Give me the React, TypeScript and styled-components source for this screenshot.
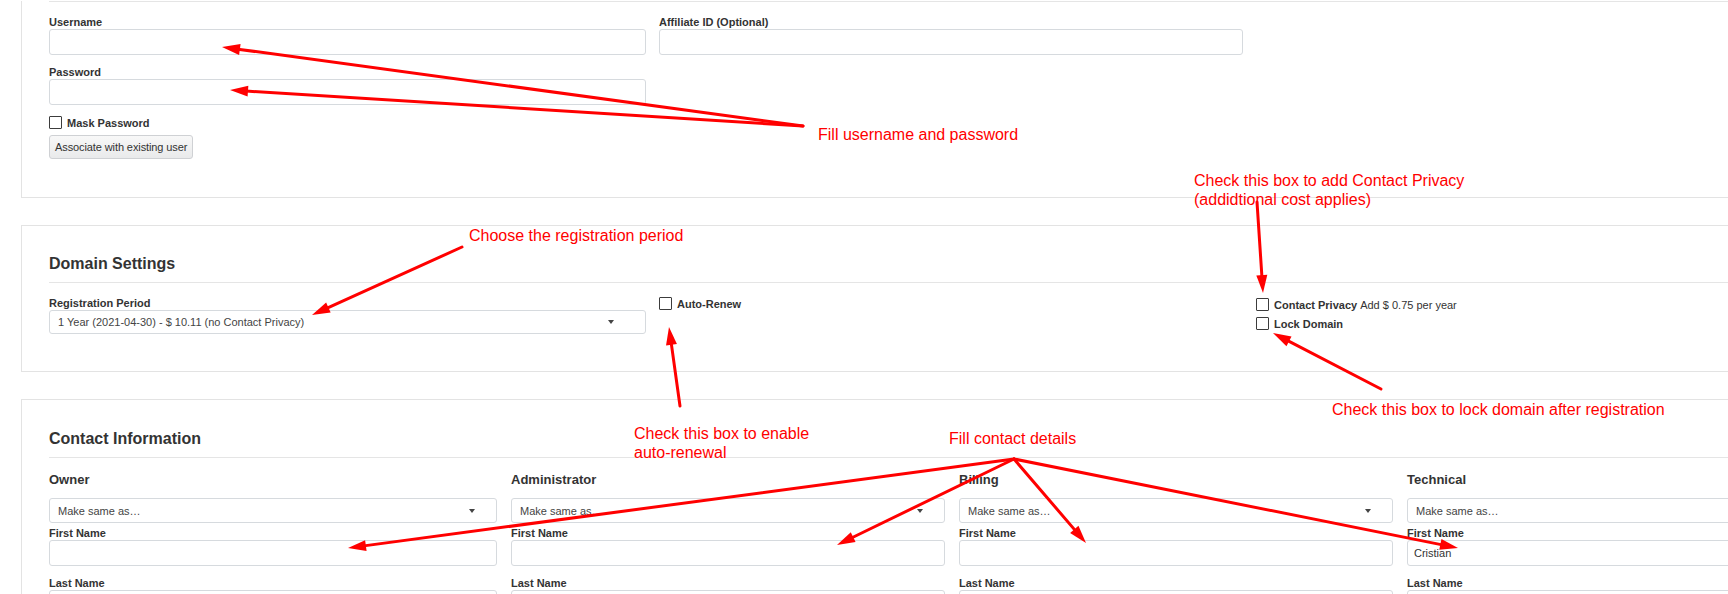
import styled, { createGlobalStyle } from "styled-components";

const GlobalStyle = createGlobalStyle`
  html, body {
    margin: 0;
    padding: 0;
    overflow: hidden;
    background: #fff;
  }
  body {
    font-family: "Liberation Sans", Arial, sans-serif;
    color: #333;
  }
`;

const Page = styled.div`
  position: relative;
  width: 1900px;
  height: 594px;
  padding: 1px 0 0 21px;
  box-sizing: border-box;
`;

const Card = styled.section<{ $cut?: boolean; $top?: number; $bottom?: number }>`
  background: #fff;
  border: 1px solid #e3e3e3;
  border-top-width: ${(p) => (p.$cut ? 0 : 1)}px;
  padding: ${(p) => (p.$cut ? 0 : p.$top ?? 30)}px 28px ${(p) => p.$bottom ?? 37}px 27px;
  margin-bottom: 27px;
`;

const Heading = styled.h3`
  margin: 0 0 9px;
  font-size: 16px;
  line-height: 18px;
  font-weight: bold;
  color: #333;
`;

const Divider = styled.hr`
  margin: 0 0 13px;
  border: 0;
  height: 1px;
  background: #e5e5e5;
`;

const FormGrid = styled.div`
  display: grid;
  grid-template-columns: 597px 584px 584px;
  column-gap: 13px;
  align-items: start;
`;

const ContactGrid = styled.div`
  display: grid;
  grid-template-columns: 448px 434px 434px 434px;
  column-gap: 14px;
  align-items: start;
`;

const Column = styled.div<{ $pad?: number }>`
  display: flex;
  flex-direction: column;
  padding-top: ${(p) => p.$pad ?? 0}px;
`;

const Field = styled.div<{ $gap?: number }>`
  display: flex;
  flex-direction: column;
  margin-top: ${(p) => p.$gap ?? 0}px;
`;

const Label = styled.label`
  display: block;
  font-size: 11px;
  line-height: 14px;
  font-weight: bold;
  color: #333;
`;

const TextInput = styled.input`
  box-sizing: border-box;
  width: 100%;
  height: 26px;
  margin: 0;
  padding: 0 6px;
  border: 1px solid #d6dade;
  border-radius: 3px;
  background: #fff;
  font-family: "Liberation Sans", Arial, sans-serif;
  font-size: 11px;
  color: #333;
  outline: none;
`;

const Select = styled.div<{ $h: number; $caret: number }>`
  box-sizing: border-box;
  height: ${(p) => p.$h}px;
  display: flex;
  align-items: center;
  justify-content: space-between;
  padding: 0 ${(p) => p.$caret}px 0 8px;
  border: 1px solid #d6dade;
  border-radius: 3px;
  background: #fff;
  font-size: 11px;
  color: #444;
  white-space: nowrap;
`;

const Caret = styled.span`
  width: 0;
  height: 0;
  border-left: 3px solid transparent;
  border-right: 3px solid transparent;
  border-top: 4px solid #444;
`;

const CheckRow = styled.label<{ $gap?: number }>`
  display: flex;
  align-items: center;
  gap: 5px;
  height: 13px;
  margin-top: ${(p) => p.$gap ?? 0}px;
  font-size: 11px;
  color: #333;
  white-space: nowrap;
`;

const Box = styled.input.attrs({ type: "checkbox" })`
  appearance: none;
  box-sizing: border-box;
  width: 13px;
  height: 13px;
  margin: 0;
  border: 1px solid #3c3c3c;
  border-radius: 1px;
  background: #fff;
  flex: none;
`;

const Strong = styled.b`
  font-weight: bold;
  margin-right: 3px;
`;

const Button = styled.button`
  align-self: flex-start;
  height: 24px;
  margin-top: 6px;
  padding: 0 5px;
  border: 1px solid #cfd1d4;
  border-radius: 3px;
  background: linear-gradient(#f8f8f8, #e9eaeb);
  font-family: "Liberation Sans", Arial, sans-serif;
  font-size: 11px;
  letter-spacing: -0.1px;
  color: #333;
`;

const RoleTitle = styled.h4`
  margin: 1px 0 10px;
  font-size: 13px;
  line-height: 16px;
  font-weight: bold;
  color: #333;
`;

const Overlay = styled.div`
  position: absolute;
  inset: 0;
  pointer-events: none;
`;

const Note = styled.div<{ $x: number; $y: number }>`
  position: absolute;
  left: ${(p) => p.$x}px;
  top: ${(p) => p.$y}px;
  font-family: "Liberation Sans", Arial, sans-serif;
  font-size: 16px;
  line-height: 19px;
  color: #ff0000;
  white-space: nowrap;
`;

const Arrows = styled.svg`
  position: absolute;
  left: 0;
  top: 0;
`;

type ArrowProps = { from: [number, number]; to: [number, number] };

const Arrow = ({ from, to }: ArrowProps) => {
  const [x1, y1] = from;
  const [x2, y2] = to;
  const len = Math.hypot(x2 - x1, y2 - y1);
  const ux = (x2 - x1) / len;
  const uy = (y2 - y1) / len;
  const bx = x2 - ux * 18;
  const by = y2 - uy * 18;
  const hw = 5.5;
  const head = `${x2},${y2} ${bx - uy * hw},${by + ux * hw} ${bx + uy * hw},${by - ux * hw}`;
  return (
    <g>
      <line
        x1={x1}
        y1={y1}
        x2={bx + ux * 2}
        y2={by + uy * 2}
        stroke="#ff0000"
        strokeWidth={3}
        strokeLinecap="round"
      />
      <polygon points={head} fill="#ff0000" />
    </g>
  );
};

const arrows: ArrowProps[] = [
  { from: [803, 126], to: [222, 47] },
  { from: [803, 126], to: [230, 90] },
  { from: [462, 247], to: [312, 315] },
  { from: [680, 406], to: [669, 327] },
  { from: [1257, 202], to: [1263, 293] },
  { from: [1381, 389], to: [1273, 333] },
  { from: [1014, 459], to: [348, 548] },
  { from: [1014, 459], to: [837, 545] },
  { from: [1014, 459], to: [1086, 543] },
  { from: [1014, 459], to: [1458, 548] },
];

const contacts = [
  { role: "Owner", first: "" },
  { role: "Administrator", first: "" },
  { role: "Billing", first: "" },
  { role: "Technical", first: "Cristian" },
];

const App = () => {
  return (
    <>
      <GlobalStyle />
      <Page>
        <Card $cut $bottom={38}>
          <Divider />
          <FormGrid>
            <Column>
              <Field>
                <Label>Username</Label>
                <TextInput />
              </Field>
              <Field $gap={10}>
                <Label>Password</Label>
                <TextInput />
              </Field>
              <CheckRow $gap={11}>
                <Box />
                <Strong>Mask Password</Strong>
              </CheckRow>
              <Button>Associate with existing user</Button>
            </Column>
            <Column>
              <Field>
                <Label>Affiliate ID (Optional)</Label>
                <TextInput />
              </Field>
            </Column>
          </FormGrid>
        </Card>

        <Card $top={29} $bottom={37}>
          <Heading>Domain Settings</Heading>
          <Divider />
          <FormGrid>
            <Column>
              <Field>
                <Label>Registration Period</Label>
                <Select $h={24} $caret={31}>
                  1 Year (2021-04-30) - $ 10.11 (no Contact Privacy)
                  <Caret />
                </Select>
              </Field>
            </Column>
            <Column $pad={1}>
              <CheckRow>
                <Box />
                <Strong>Auto-Renew</Strong>
              </CheckRow>
            </Column>
            <Column $pad={2}>
              <CheckRow>
                <Box />
                <span>
                  <Strong>Contact Privacy</Strong>Add $ 0.75 per year
                </span>
              </CheckRow>
              <CheckRow $gap={6}>
                <Box />
                <Strong>Lock Domain</Strong>
              </CheckRow>
            </Column>
          </FormGrid>
        </Card>

        <Card>
          <Heading>Contact Information</Heading>
          <Divider />
          <ContactGrid>
            {contacts.map((c) => (
              <Column key={c.role}>
                <RoleTitle>{c.role}</RoleTitle>
                <Select $h={25} $caret={21}>
                  Make same as…
                  <Caret />
                </Select>
                <Field $gap={3}>
                  <Label>First Name</Label>
                  <TextInput defaultValue={c.first} />
                </Field>
                <Field $gap={10}>
                  <Label>Last Name</Label>
                  <TextInput />
                </Field>
              </Column>
            ))}
          </ContactGrid>
        </Card>

        <Overlay>
          <Note $x={818} $y={125}>Fill username and password</Note>
          <Note $x={1194} $y={171}>
            Check this box to add Contact Privacy
            <br />
            (addidtional cost applies)
          </Note>
          <Note $x={469} $y={226}>Choose the registration period</Note>
          <Note $x={1332} $y={400}>Check this box to lock domain after registration</Note>
          <Note $x={634} $y={424}>
            Check this box to enable
            <br />
            auto-renewal
          </Note>
          <Note $x={949} $y={429}>Fill contact details</Note>
          <Arrows width={1728} height={594}>
            {arrows.map((a, i) => (
              <Arrow key={i} from={a.from} to={a.to} />
            ))}
          </Arrows>
        </Overlay>
      </Page>
    </>
  );
};

export default App;
